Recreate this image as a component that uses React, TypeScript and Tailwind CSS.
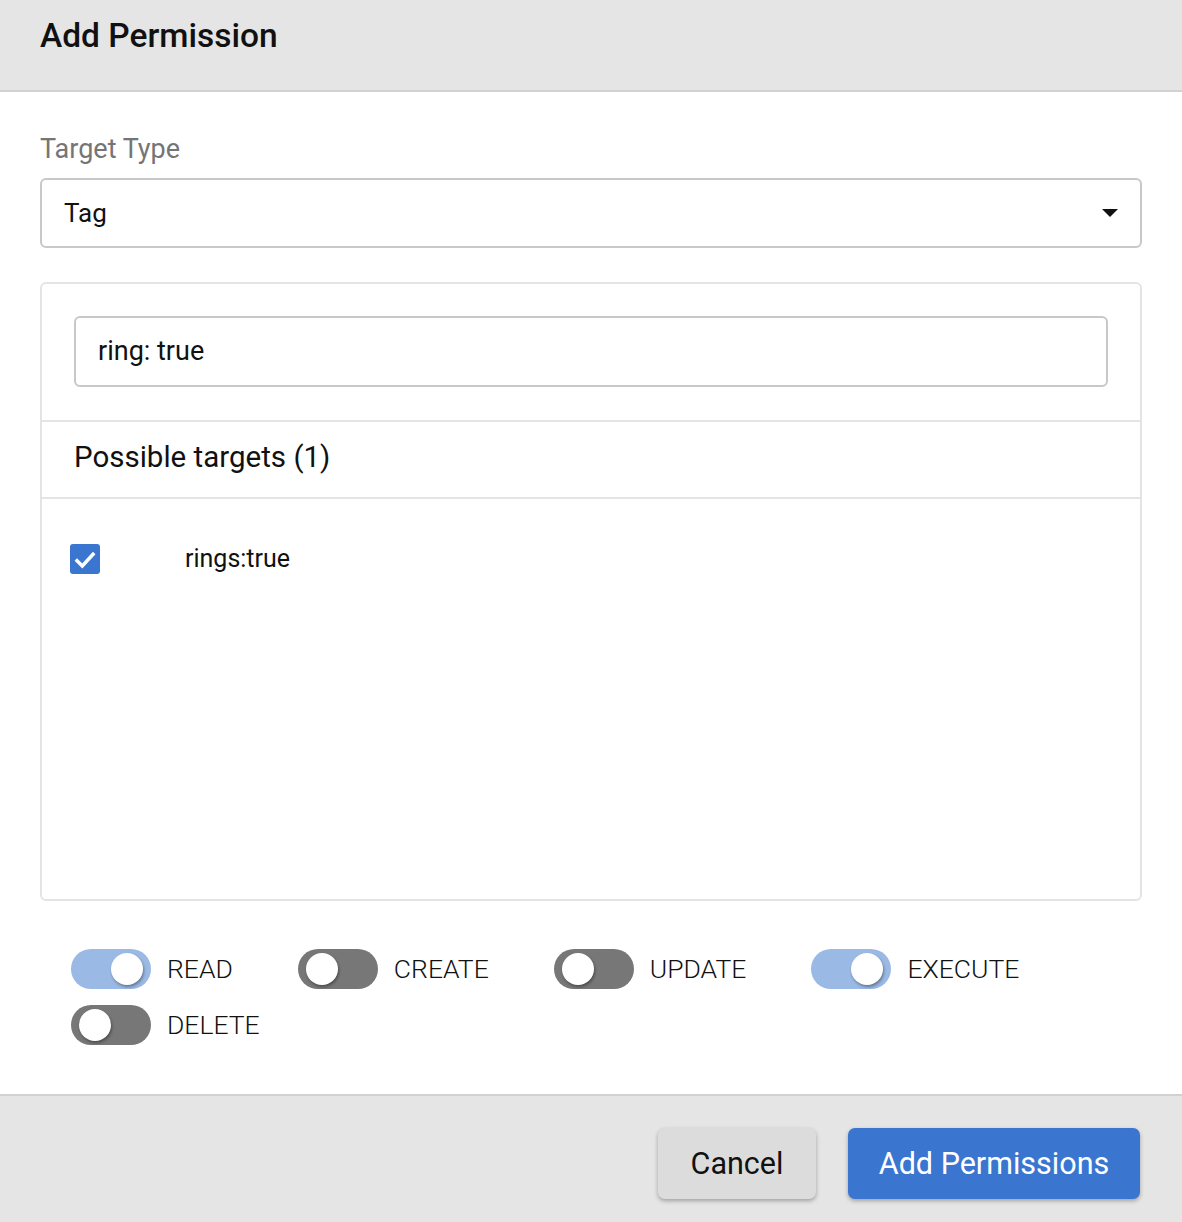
import React from "react";

function Toggle({ on, label }: { on: boolean; label: string }) {
  return (
    <div className="flex items-center">
      <div
        className={
          "relative h-[40px] w-[80px] rounded-full " +
          (on ? "bg-[#9bb9e5]" : "bg-[#777777]")
        }
      >
        <div
          className={
            "absolute top-[4px] h-[32px] w-[32px] rounded-full bg-white shadow-[1px_2px_3px_rgba(0,0,0,0.35)] " +
            (on ? "left-[40px]" : "left-[8px]")
          }
        />
      </div>
      <span className="ml-[16px] text-[26.5px] font-light text-[#111] leading-none">{label}</span>
    </div>
  );
}

export default function App() {
  return (
    <div
      className="w-[1182px] h-[1222px] bg-white flex flex-col"
      style={{ fontFamily: "Roboto, 'Noto Sans', sans-serif" }}
    >
      <div className="h-[92px] shrink-0 bg-[#e5e5e5] border-b-2 border-[#d2d2d2] px-[40px] flex items-center">
        <h1 className="text-[33.5px] font-medium text-[#111] leading-none -mt-[18px]">Add Permission</h1>
      </div>

      <div className="flex-1 px-[40px] pt-[44px]">
        <div className="text-[27px] text-[#757575] leading-none mb-[15px]">Target Type</div>
        <div className="h-[70px] rounded-[6px] border-2 border-[#c8c8c8] flex items-center justify-between pl-[22px] pr-[22px]">
          <span className="text-[26px] text-[#111]">Tag</span>
          <svg width="16" height="8" viewBox="0 0 16 8">
            <path d="M0 0 L16 0 L8 8 Z" fill="#111" />
          </svg>
        </div>

        <div className="mt-[34px] h-[619px] rounded-[6px] border-2 border-[#e4e4e4] flex flex-col">
          <div className="px-[32px] pt-[32px] pb-[33px] border-b-2 border-[#e4e4e4]">
            <div className="h-[71px] rounded-[6px] border-2 border-[#c8c8c8] flex items-center pl-[22px]">
              <span className="text-[27px] text-[#111]">ring: true</span>
            </div>
          </div>
          <div className="h-[77px] px-[32px] pb-[5px] flex items-center border-b-2 border-[#e4e4e4]">
            <span className="text-[29.5px] text-[#111]">Possible targets (1)</span>
          </div>
          <div className="flex items-center pl-[28px] pt-[41px]">
            <div className="w-[30px] h-[30px] rounded-[3px] bg-[#3a76cf] flex items-center justify-center">
              <svg width="26" height="26" viewBox="0 0 24 24">
                <path d="M3.5 12.5 L9.5 18.5 L20.5 6.5" stroke="white" strokeWidth="3.2" fill="none" />
              </svg>
            </div>
            <span className="ml-[85px] text-[25px] text-[#111]">rings:true</span>
          </div>
        </div>

        <div className="mt-[48px] pl-[31px] flex flex-wrap gap-x-[65px] gap-y-[16px] w-[1000px]">
          <Toggle on={true} label="READ" />
          <Toggle on={false} label="CREATE" />
          <Toggle on={false} label="UPDATE" />
          <Toggle on={true} label="EXECUTE" />
          <Toggle on={false} label="DELETE" />
        </div>
      </div>

      <div className="h-[128px] shrink-0 bg-[#e5e5e5] border-t-2 border-[#d2d2d2] flex items-start justify-end pr-[42px] pt-[32px] gap-[32px]">
        <button className="h-[71px] w-[158px] rounded-[7px] bg-[#dcdcdc] shadow-[0_2px_4px_rgba(0,0,0,0.3)] text-[30.5px] text-[#111]">
          Cancel
        </button>
        <button className="h-[71px] w-[292px] rounded-[7px] bg-[#3a76cf] shadow-[0_2px_4px_rgba(0,0,0,0.3)] text-[30.5px] text-white">
          Add Permissions
        </button>
      </div>
    </div>
  );
}
